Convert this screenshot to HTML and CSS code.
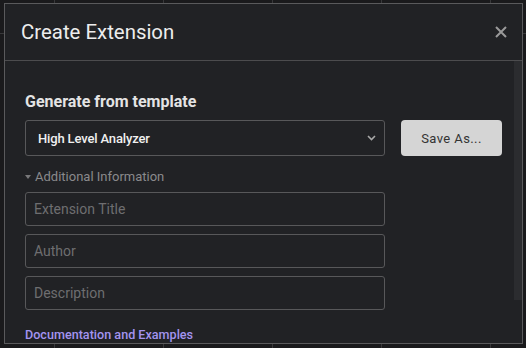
FILE: index.html
```html
<!DOCTYPE html>
<html lang="en">
<head>
    <meta charset="UTF-8">
    <meta name="viewport" content="width=device-width, initial-scale=1.0">
    <title>Create Extension</title>
    <link rel="stylesheet" href="styles.css">
</head>
<body>

<div class="modal">
    <div class="modal-header">
        <h1 class="modal-title">Create Extension</h1>
        <button class="close-button" aria-label="Close">
            <svg width="12" height="12" viewBox="0 0 12 12">
                <path d="M1 1 L11 11 M11 1 L1 11" stroke="#9a9a9a" stroke-width="2" fill="none"/>
            </svg>
        </button>
    </div>
    <div class="modal-body">
        <div class="modal-content">
            <h2 class="section-title">Generate from template</h2>
            <div class="template-row">
                <div class="select-box">
                    <span>High Level Analyzer</span>
                    <svg width="9" height="6" viewBox="0 0 9 6">
                        <path d="M1 1 L4.5 4.5 L8 1" stroke="#a8a8a8" stroke-width="1.6" fill="none"/>
                    </svg>
                </div>
                <button class="save-button">Save As...</button>
            </div>
            <div class="details-toggle"><span class="caret"></span>Additional Information</div>
            <div class="fields">
                <input class="text-field" type="text" placeholder="Extension Title">
                <input class="text-field" type="text" placeholder="Author">
                <input class="text-field" type="text" placeholder="Description">
            </div>
            <a class="docs-link" href="#">Documentation and Examples</a>
        </div>
        <div class="scrollbar">
            <div class="scroll-thumb"></div>
        </div>
    </div>
</div>

</body>
</html>
```

FILE: styles.css
```css
body {
    font-family: Roboto, "Liberation Sans", sans-serif;
    margin: 0;
    padding: 3px 0 0 4px;
    height: 348px;
    box-sizing: border-box;
    overflow: hidden;
    background-color: #1a1a1c;
    background-image:
        linear-gradient(to bottom, transparent 33px, #38383a 33px, #38383a 34px, transparent 34px),
        linear-gradient(to right, #38383a 1px, transparent 1px);
    background-size: 100% 100%, 109px 100%;
    background-position: 0 0, 54px 0;
}

.modal {
    width: 519px;
    height: 341px;
    box-sizing: border-box;
    border: 1px solid #5a5a5c;
    background-color: #212225;
    display: flex;
    flex-direction: column;
}

.modal-header {
    height: 57px;
    box-sizing: border-box;
    border-bottom: 1px solid #4c4c4e;
    padding: 0 15px 0 16px;
    display: flex;
    align-items: center;
    justify-content: space-between;
}

.modal-title {
    margin: 0;
    font-size: 20.4px;
    font-weight: 400;
    color: #ededed;
}

.close-button {
    background: none;
    border: none;
    padding: 0;
    width: 12px;
    height: 12px;
    display: flex;
    cursor: pointer;
}

.modal-body {
    flex: 1;
    display: flex;
    overflow: hidden;
}

.modal-content {
    flex: 1;
    padding: 31px 0 0 20px;
}

.section-title {
    margin: 0 0 8px;
    font-size: 16px;
    line-height: 20px;
    font-weight: 700;
    color: #e4e4e4;
}

.template-row {
    display: flex;
    gap: 16px;
}

.select-box {
    width: 360px;
    height: 36px;
    box-sizing: border-box;
    border: 1px solid #58585a;
    border-radius: 3px;
    padding: 0 8px 0 12px;
    display: flex;
    align-items: center;
    justify-content: space-between;
    font-size: 13px;
    font-weight: 500;
    letter-spacing: -0.15px;
    color: #f0f0f0;
}

.save-button {
    width: 101px;
    height: 36px;
    border: none;
    border-radius: 4px;
    background-color: #d5d5d5;
    color: #333;
    font-family: Roboto, "Liberation Sans", sans-serif;
    font-size: 13px;
    letter-spacing: 0.4px;
    cursor: pointer;
}

.details-toggle {
    margin-top: 13px;
    display: flex;
    align-items: center;
    gap: 4px;
    font-size: 13px;
    line-height: 15px;
    color: #8a8a8c;
}

.caret {
    width: 0;
    height: 0;
    border-left: 3.5px solid transparent;
    border-right: 3.5px solid transparent;
    border-top: 4px solid #78787a;
}

.fields {
    margin-top: 8px;
    width: 360px;
    display: flex;
    flex-direction: column;
    gap: 8px;
}

.text-field {
    height: 34px;
    box-sizing: border-box;
    border: 1px solid #58585a;
    border-radius: 3px;
    background: transparent;
    padding: 0 8px;
    font-family: Roboto, "Liberation Sans", sans-serif;
    font-size: 14px;
    color: #e0e0e0;
    outline: none;
}

.text-field::placeholder {
    color: #6e6e70;
}

.docs-link {
    display: block;
    margin-top: 17px;
    font-size: 12.6px;
    line-height: 15px;
    font-weight: 500;
    color: #a394f0;
    text-decoration: none;
}

.scrollbar {
    width: 8px;
}

.scroll-thumb {
    height: 239px;
    background-color: #2b2c2f;
}
```
